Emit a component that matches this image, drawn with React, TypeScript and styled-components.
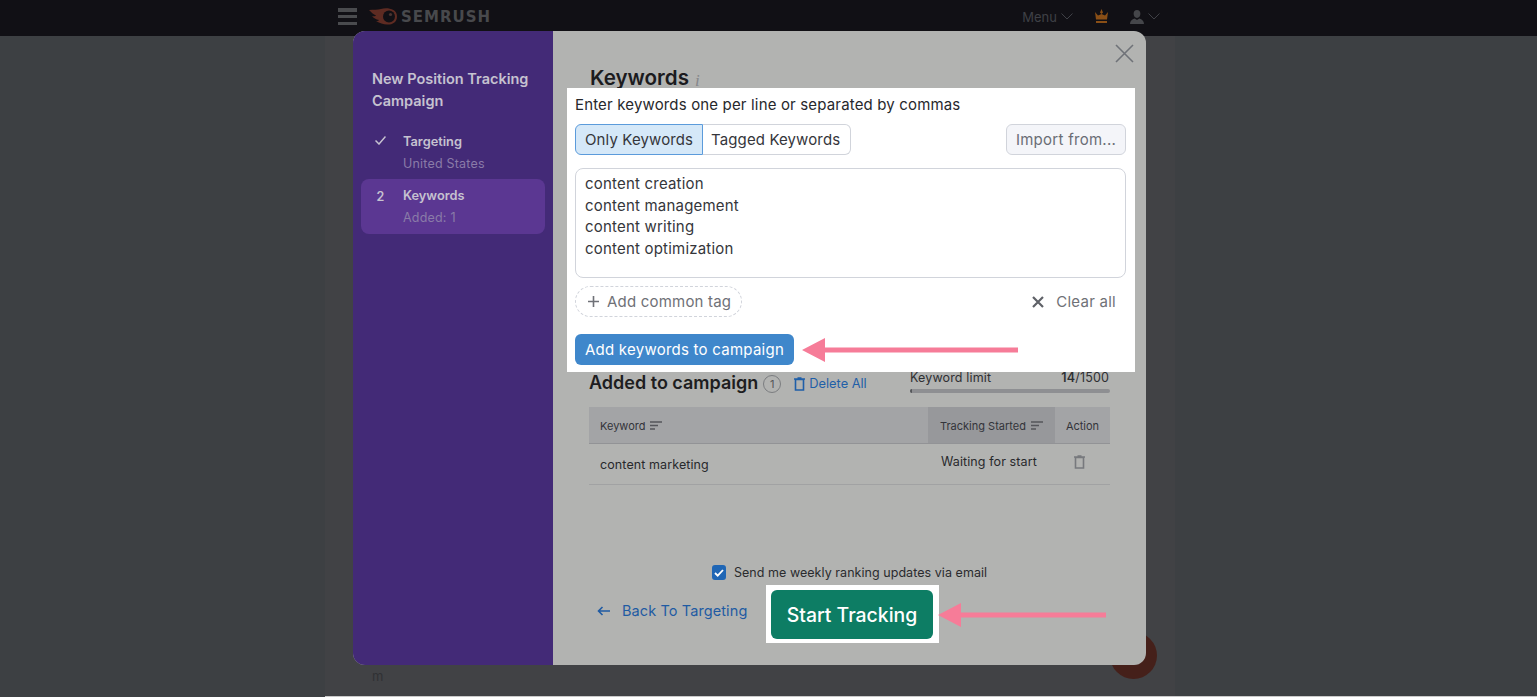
import styled, { createGlobalStyle } from 'styled-components'

const GlobalStyle = createGlobalStyle`
  html, body {
    margin: 0;
    padding: 0;
    background: #3d4043;
    font-family: Inter, "Liberation Sans", sans-serif;
  }
  * { box-sizing: border-box; }
`

const Page = styled.div`
  position: relative;
  width: 1537px;
  height: 697px;
  overflow: hidden;
  background: #3d4043;
`

const Header = styled.header`
  height: 36px;
  background: #111015;
  padding-left: 325px;
`

const HeaderInner = styled.div`
  width: 850px;
  height: 100%;
  padding: 0 15px 3px 13px;
  display: flex;
  align-items: center;
`

const Burger = styled.div`
  width: 19px;
  height: 17px;
  display: flex;
  flex-direction: column;
  justify-content: space-between;
  margin-right: 12px;

  span {
    display: block;
    height: 3.5px;
    background: #4a4b4e;
  }
`

const Brand = styled.div`
  font-family: "DejaVu Sans", sans-serif;
  font-weight: 700;
  font-size: 15px;
  letter-spacing: 1px;
  color: #48494c;
  margin-left: 4px;
`

const HeaderRight = styled.div`
  margin-left: auto;
  display: flex;
  align-items: center;
  gap: 4px;
  color: #3f4046;
  font-size: 13px;
`

const HeaderGap = styled.span`
  width: 13px;
`

const Column = styled.main`
  width: 850px;
  height: 660px;
  margin-left: 325px;
  background: #414245;
  padding: 632px 0 0 47px;
  color: #303134;
  font-size: 13px;
`

const BottomLine = styled.div`
  position: absolute;
  left: 325px;
  right: 0;
  bottom: 0;
  height: 1px;
  background: #c9c9c9;
`

const ChatBubble = styled.div`
  position: absolute;
  left: 1110px;
  top: 632px;
  width: 47px;
  height: 47px;
  border-radius: 50%;
  background: #45201a;
`

const Modal = styled.section`
  position: absolute;
  left: 353px;
  top: 31px;
  width: 793px;
  height: 634px;
  display: flex;
  border-radius: 12px;
  overflow: hidden;
  background: #b2b3b1;
`

const Sidebar = styled.aside`
  width: 200px;
  flex: none;
  background: #432a77;
  padding: 37px 8px 0;
`

const SideTitle = styled.h2`
  margin: 0 0 13px 11px;
  font-size: 14.5px;
  line-height: 22px;
  font-weight: 600;
  color: #c6c2d0;
`

const Step = styled.div<{ $active?: boolean }>`
  height: 55px;
  border-radius: 8px;
  padding: 6px 0 0 0;
  display: grid;
  grid-template-columns: 42px 1fr;
  grid-template-rows: 22px 22px;
  background: ${p => (p.$active ? '#5b3792' : 'transparent')};
  margin-bottom: ${p => (p.$active ? 0 : '-1px')};
`

const StepMark = styled.div`
  grid-row: 1;
  display: flex;
  align-items: center;
  justify-content: center;
  padding-right: 3px;
  font-size: 12.5px;
  font-weight: 600;
  color: #c6c2d0;

  svg {
    margin-bottom: 3px;
  }
`

const StepName = styled.div`
  font-size: 12.8px;
  line-height: 22px;
  font-weight: 600;
  color: #c6c2d0;
`

const StepSub = styled.div`
  grid-column: 2;
  font-size: 12.5px;
  line-height: 22px;
  letter-spacing: 0.2px;
  color: #8a7ba8;
`

const Content = styled.div`
  position: relative;
  flex: 1;
  display: flex;
  flex-direction: column;
`

const CloseButton = styled.div`
  position: absolute;
  right: 12px;
  top: 13px;
  width: 19px;
  height: 19px;
  color: #6f7278;
`

const TitleBlock = styled.div`
  height: 57px;
  padding: 32px 0 0 37px;
  display: flex;
  align-items: flex-start;
  gap: 6px;
`

const Title = styled.h1`
  margin: 0;
  font-size: 20.6px;
  line-height: 30px;
  font-weight: 600;
  color: #1b1b1e;
`

const InfoMark = styled.span`
  font-family: "Liberation Serif", serif;
  font-style: italic;
  font-size: 17px;
  line-height: 36px;
  color: #85878b;
`

const Spotlight = styled.div`
  position: relative;
  margin-left: 14px;
  width: 568px;
  height: 284px;
  background: #fff;
  padding: 6px 9px 0 8px;
`

const Hint = styled.div`
  font-size: 15px;
  line-height: 22px;
  letter-spacing: 0.16px;
  color: #27282c;
`

const TabRow = styled.div`
  margin-top: 8px;
  display: flex;
  justify-content: space-between;
`

const Tabs = styled.div`
  display: flex;
`

const Tab = styled.div<{ $on?: boolean }>`
  height: 31px;
  width: ${p => (p.$on ? '128px' : '148px')};
  padding-left: ${p => (p.$on ? '9px' : '8px')};
  display: flex;
  align-items: center;
  font-size: 15px;
  letter-spacing: 0.12px;
  color: #35363b;
  background: ${p => (p.$on ? '#d5e8f8' : '#fff')};
  border: 1px solid ${p => (p.$on ? '#5b9bdb' : '#d1d4db')};
  border-radius: ${p => (p.$on ? '6px 0 0 6px' : '0 6px 6px 0')};
  ${p => (p.$on ? '' : 'border-left: none;')}
`

const ImportButton = styled.div`
  width: 120px;
  height: 31px;
  display: flex;
  align-items: center;
  justify-content: center;
  font-size: 15px;
  letter-spacing: 0.27px;
  color: #6a6d75;
  background: #f4f5f9;
  border: 1px solid #d1d4db;
  border-radius: 6px;
`

const KeywordArea = styled.textarea`
  display: block;
  width: 551px;
  height: 110px;
  margin-top: 13px;
  padding: 4px 9px;
  border: 1px solid #d1d4db;
  border-radius: 8px;
  outline: none;
  resize: none;
  overflow: hidden;
  font-family: inherit;
  font-size: 15px;
  line-height: 21.7px;
  letter-spacing: 0.2px;
  color: #35363b;
`

const TagRow = styled.div`
  margin-top: 8px;
  display: flex;
  align-items: center;
  justify-content: space-between;
`

const TagButton = styled.div`
  width: 167px;
  height: 31px;
  display: flex;
  align-items: center;
  gap: 7px;
  padding-left: 11px;
  border: 1px dashed #d1d4db;
  border-radius: 16px;
  font-size: 15px;
  letter-spacing: 0.2px;
  color: #6f7177;
`

const ClearButton = styled.div`
  display: flex;
  align-items: center;
  gap: 12px;
  padding-right: 10px;
  font-size: 15px;
  letter-spacing: 0.25px;
  color: #6f7177;
`

const ActionRow = styled.div`
  margin-top: 17px;
  display: flex;
  align-items: center;
  gap: 8px;
`

const AddButton = styled.div`
  width: 219px;
  height: 31px;
  display: flex;
  align-items: center;
  justify-content: center;
  border-radius: 6px;
  background: #3f87cb;
  color: #fff;
  font-size: 15px;
  letter-spacing: 0.25px;
`

const AddedSection = styled.div`
  padding: 0 36px 0 36px;
`

const AddedHead = styled.div`
  height: 35px;
  display: flex;
  align-items: flex-start;
`

const AddedTitle = styled.h3`
  margin: 0;
  font-size: 18px;
  line-height: 21px;
  font-weight: 600;
  color: #1d1d20;
`

const CountBadge = styled.span`
  width: 18px;
  height: 18px;
  margin: 3px 0 0 5px;
  border: 1px solid #7b7d80;
  border-radius: 50%;
  display: flex;
  align-items: center;
  justify-content: center;
  font-size: 11px;
  color: #55575a;
`

const DeleteAll = styled.div`
  margin: 3px 0 0 13px;
  display: flex;
  align-items: center;
  gap: 4px;
  color: #1f5fa8;
  font-size: 12.8px;
  line-height: 18px;
`

const Limit = styled.div`
  margin-left: auto;
  width: 200px;
  margin-top: -2px;
  font-size: 12.5px;
  color: #2f3033;
`

const LimitLabels = styled.div`
  display: flex;
  justify-content: space-between;
  line-height: 16px;
  letter-spacing: 0.15px;
  padding-right: 1px;

  b {
    font-weight: 600;
  }
`

const LimitTrack = styled.div`
  margin-top: 3px;
  height: 4px;
  border-radius: 2px;
  background: #8e8f92;
  overflow: hidden;

  span {
    display: block;
    height: 100%;
    background: #55575a;
  }
`

const Grid = styled.div`
  display: grid;
  grid-template-columns: 339px 127px 55px;
`

const HeadCell = styled.div<{ $sorted?: boolean; $center?: boolean }>`
  height: 37px;
  display: flex;
  align-items: center;
  gap: 5px;
  padding-top: 1px;
  padding-left: ${p => (p.$center ? 0 : p.$sorted ? '12px' : '11px')};
  justify-content: ${p => (p.$center ? 'center' : 'flex-start')};
  background: ${p => (p.$sorted ? '#97989b' : '#a3a4a6')};
  border-bottom: 1px solid #929396;
  font-size: 11px;
  color: #33343a;
`

const BodyCell = styled.div<{ $center?: boolean; $raise?: boolean }>`
  height: 41px;
  display: flex;
  align-items: center;
  justify-content: ${p => (p.$center ? 'center' : 'flex-start')};
  padding-left: ${p => (p.$center ? 0 : p.$raise ? '13px' : '11px')};
  padding-right: ${p => (p.$center ? '7px' : 0)};
  padding-bottom: ${p => (p.$raise ? '5px' : 0)};
  border-bottom: 1px solid #a1a2a3;
  font-size: 12.5px;
  letter-spacing: 0.1px;
  color: #28292c;
`

const Footer = styled.div`
  margin-top: auto;
  padding-bottom: 22px;
  display: flex;
  flex-direction: column;
  align-items: center;
`

const OptIn = styled.label`
  display: flex;
  align-items: center;
  gap: 8px;
  font-size: 12.5px;
  letter-spacing: 0.05px;
  color: #2a2b2e;
`

const CheckBox = styled.span`
  width: 14px;
  height: 15px;
  border-radius: 3px;
  background: #1f66b5;
  display: flex;
  align-items: center;
  justify-content: center;
`

const FooterRow = styled.div`
  align-self: stretch;
  margin-top: 5px;
  padding-left: 44px;
  display: flex;
  align-items: center;
`

const BackLink = styled.div`
  width: 169px;
  margin-top: -7px;
  display: flex;
  align-items: center;
  gap: 11px;
  font-size: 14.5px;
  letter-spacing: 0.1px;
  color: #1f5ba3;
`

const StartFrame = styled.div`
  width: 173px;
  height: 58px;
  background: #fff;
  padding: 5px;
  margin-right: -1px;
`

const StartButton = styled.div`
  width: 162px;
  height: 49px;
  border-radius: 6px;
  background: #0d7d64;
  color: #fff;
  display: flex;
  align-items: center;
  justify-content: center;
  font-size: 19.4px;
  font-weight: 500;
`

const FooterArrow = styled.div`
  margin-top: 2px;
`

const ArrowSvg = styled.svg`
  display: block;
  flex: none;
`

const ArrowIcon = ({ width }: { width: number }) => (
  <ArrowSvg width={width} height="26" viewBox={`0 0 ${width} 26`}>
    <path d={`M0 13 L23 1 V10.5 H${width} V15.5 H23 V25 Z`} fill="#f67c98" />
  </ArrowSvg>
)

const SortIcon = () => (
  <svg width="13" height="9" viewBox="0 0 13 9" fill="none" stroke="#55565b" strokeWidth="1.3">
    <path d="M0 1h12M0 4.5h8M0 8h5" />
  </svg>
)

const TrashIcon = ({ color }: { color: string }) => (
  <svg width="11" height="14" viewBox="0 0 11 14" fill="none" stroke={color} strokeWidth="1.6">
    <path d="M1.5 2.5h8v10.5h-8zM0 2h11M3.5 1h4" />
  </svg>
)

const Chevron = ({ color }: { color: string }) => (
  <svg width="12" height="7" viewBox="0 0 12 7" fill="none" stroke={color} strokeWidth="1">
    <path d="M0.5 0.5L6 6l5.5-5.5" />
  </svg>
)

const CometLogo = () => (
  <svg width="28" height="17" viewBox="0 0 28 17">
    <path
      d="M0 2 C5 1.5 8 2 12 1 C17 -0.5 28 0 28 8.5 C28 15 22 17 18 16.5 C14 16.5 11 15 7 13 C9 13 10 12.5 10 12 C7 11.5 4.5 10 3 8 C5 8.5 7 8 7 7.5 C4.5 6.5 2 4 0 2 Z"
      fill="#5e2b22"
    />
    <circle cx="20" cy="8.5" r="6" fill="#111015" />
    <circle cx="21.5" cy="6.5" r="1.6" fill="#4a3330" />
  </svg>
)

const CrownIcon = () => (
  <svg width="15" height="15" viewBox="0 0 15 15" fill="#8a4f16">
    <path d="M7.5 0 L9 3.5 L7.5 5 L6 3.5 Z M1 3 L4 6.5 L7.5 5 L11 6.5 L14 3 L13 10.5 H2 Z M2 12 H13 V14 H2 Z" />
  </svg>
)

const UserIcon = () => (
  <svg width="14" height="14" viewBox="0 0 14 14" fill="#45464a">
    <path d="M7 0c2.2 0 3.4 1.6 3.4 3.8S9 8 7 8 3.6 6 3.6 3.8 4.8 0 7 0zM0 14c0-3 2-4.6 4.6-5.4L7 10l2.4-1.4C12 9.4 14 11 14 14z" />
  </svg>
)

export default function App() {
  return (
    <Page>
      <GlobalStyle />
      <Header>
        <HeaderInner>
          <Burger>
            <span />
            <span />
            <span />
          </Burger>
          <CometLogo />
          <Brand>SEMRUSH</Brand>
          <HeaderRight>
            <span>Menu</span>
            <Chevron color="#3f4046" />
            <HeaderGap />
            <CrownIcon />
            <HeaderGap />
            <UserIcon />
            <Chevron color="#3f4046" />
          </HeaderRight>
        </HeaderInner>
      </Header>
      <Column>m</Column>
      <BottomLine />
      <ChatBubble />

      <Modal>
        <Sidebar>
          <SideTitle>
            New Position Tracking
            <br />
            Campaign
          </SideTitle>
          <Step>
            <StepMark>
              <svg width="11" height="9" viewBox="0 0 11 9" fill="none" stroke="#c6c2d0" strokeWidth="1.5">
                <path d="M0.5 4.5L4 8l6.5-7.5" />
              </svg>
            </StepMark>
            <StepName>Targeting</StepName>
            <StepSub>United States</StepSub>
          </Step>
          <Step $active>
            <StepMark>2</StepMark>
            <StepName>Keywords</StepName>
            <StepSub>Added: 1</StepSub>
          </Step>
        </Sidebar>

        <Content>
          <CloseButton>
            <svg width="19" height="19" viewBox="0 0 19 19" fill="none" stroke="currentColor" strokeWidth="1.6">
              <path d="M1 1l17 17M18 1L1 18" />
            </svg>
          </CloseButton>
          <TitleBlock>
            <Title>Keywords</Title>
            <InfoMark>i</InfoMark>
          </TitleBlock>

          <Spotlight>
            <Hint>Enter keywords one per line or separated by commas</Hint>
            <TabRow>
              <Tabs>
                <Tab $on>Only Keywords</Tab>
                <Tab>Tagged Keywords</Tab>
              </Tabs>
              <ImportButton>Import from...</ImportButton>
            </TabRow>
            <KeywordArea
              readOnly
              value={'content creation\ncontent management\ncontent writing\ncontent optimization'}
            />
            <TagRow>
              <TagButton>
                <svg width="13" height="13" viewBox="0 0 13 13" fill="none" stroke="#6f7177" strokeWidth="1.6">
                  <path d="M6.5 1v11M1 6.5h11" />
                </svg>
                Add common tag
              </TagButton>
              <ClearButton>
                <svg width="12" height="12" viewBox="0 0 12 12" fill="none" stroke="#5f6167" strokeWidth="2.2">
                  <path d="M1 1l10 10M11 1L1 11" />
                </svg>
                Clear all
              </ClearButton>
            </TagRow>
            <ActionRow>
              <AddButton>Add keywords to campaign</AddButton>
              <ArrowIcon width={216} />
            </ActionRow>
          </Spotlight>

          <AddedSection>
            <AddedHead>
              <AddedTitle>Added to campaign</AddedTitle>
              <CountBadge>1</CountBadge>
              <DeleteAll>
                <TrashIcon color="#1f5fa8" />
                Delete All
              </DeleteAll>
              <Limit>
                <LimitLabels>
                  <span>Keyword limit</span>
                  <span>
                    <b>14</b>/1500
                  </span>
                </LimitLabels>
                <LimitTrack>
                  <span style={{ width: `${(14 / 1500) * 100}%` }} />
                </LimitTrack>
              </Limit>
            </AddedHead>
            <Grid>
              <HeadCell>
                Keyword <SortIcon />
              </HeadCell>
              <HeadCell $sorted>
                Tracking Started <SortIcon />
              </HeadCell>
              <HeadCell $center>Action</HeadCell>
              <BodyCell>content marketing</BodyCell>
              <BodyCell $raise>Waiting for start</BodyCell>
              <BodyCell $center $raise>
                <TrashIcon color="#77797d" />
              </BodyCell>
            </Grid>
          </AddedSection>

          <Footer>
            <OptIn>
              <CheckBox>
                <svg width="10" height="8" viewBox="0 0 10 8" fill="none" stroke="#fff" strokeWidth="1.8">
                  <path d="M1 4l2.7 2.7L9 1" />
                </svg>
              </CheckBox>
              Send me weekly ranking updates via email
            </OptIn>
            <FooterRow>
              <BackLink>
                <svg width="14" height="10" viewBox="0 0 14 10" fill="none" stroke="#1f5ba3" strokeWidth="1.6">
                  <path d="M13 5H1.5M5.5 1L1.5 5l4 4" />
                </svg>
                Back To Targeting
              </BackLink>
              <StartFrame>
                <StartButton>Start Tracking</StartButton>
              </StartFrame>
              <FooterArrow>
                <ArrowIcon width={168} />
              </FooterArrow>
            </FooterRow>
          </Footer>
        </Content>
      </Modal>
    </Page>
  )
}
